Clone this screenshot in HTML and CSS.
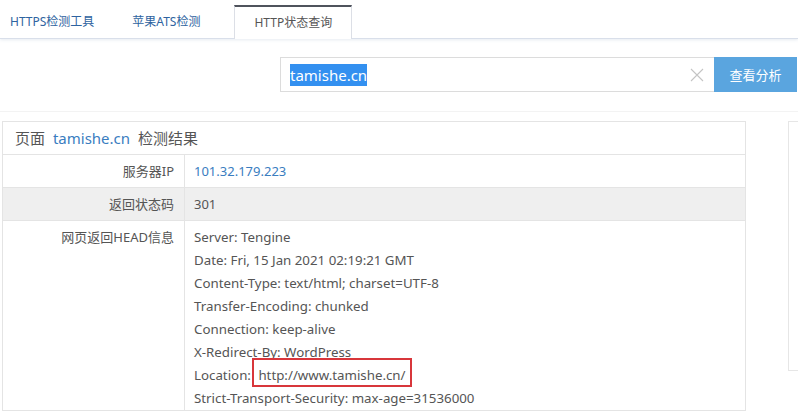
FILE: index.html
```html
<!DOCTYPE html>
<html lang="zh-CN">
<head>
<meta charset="utf-8">
<title>HTTP状态查询</title>
<link rel="stylesheet" href="styles.css">
</head>
<body>
<div class="tabs">
  <a class="tab tab-first">HTTPS检测工具</a>
  <a class="tab tab-second">苹果ATS检测</a>
  <a class="tab tab-active">HTTP状态查询</a>
</div>

<div class="search">
  <div class="search-box">
    <span class="search-text"><span class="selected">tamishe.cn</span></span>
    <svg class="clear" width="14" height="14" viewBox="0 0 14 14"><path d="M1 1L13 13M13 1L1 13" stroke="#c4c4c4" stroke-width="1.1" fill="none"/></svg>
  </div>
  <button class="search-btn">查看分析</button>
</div>

<div class="sep"></div>

<div class="main">
  <div class="panel">
    <div class="panel-head">页面 <span class="link">tamishe.cn</span> 检测结果</div>
    <div class="row">
      <div class="label">服务器IP</div>
      <div class="value link">101.32.179.223</div>
    </div>
    <div class="row row-gray">
      <div class="label">返回状态码</div>
      <div class="value">301</div>
    </div>
    <div class="row row-head">
      <div class="label">网页返回HEAD信息</div>
      <div class="value lines">
        <div>Server: Tengine</div>
        <div>Date: Fri, 15 Jan 2021 02:19:21 GMT</div>
        <div>Content-Type: text/html; charset=UTF-8</div>
        <div>Transfer-Encoding: chunked</div>
        <div>Connection: keep-alive</div>
        <div>X-Redirect-By: WordPress</div>
        <div>Location: <span class="mark">http://www.tamishe.cn/</span></div>
        <div>Strict-Transport-Security: max-age=31536000</div>
      </div>
    </div>
  </div>
  <div class="side"></div>
</div>
</body>
</html>
```

FILE: styles.css
```css
html, body {
  margin: 0;
  padding: 0;
  background: #ffffff;
  overflow: hidden;
}
body {
  width: 798px;
  height: 412px;
  font-family: "Noto Sans", "Noto Sans CJK SC", sans-serif;
  font-size: 13px;
  color: #555;
}

.tabs {
  height: 38px;
  display: flex;
  align-items: flex-end;
  padding-left: 10px;
  border-bottom: 1px solid #d9dfea;
  box-shadow: 0 1px 3px rgba(200, 210, 225, 0.45);
  position: relative;
  z-index: 1;
}
.tab {
  font-size: 12px;
  line-height: 33px;
  height: 33px;
  color: #2e63a0;
  white-space: nowrap;
}
.tab-first { margin-right: 38px; }
.tab-second { margin-right: 34px; }
.tab-active {
  color: #555;
  background: #fff;
  padding: 0 19px;
  height: 32px;
  line-height: 31px;
  border: 1px solid #dcdfe6;
  border-top: 2px solid #4f535c;
  border-bottom: none;
  margin-bottom: -1px;
}

.search {
  display: flex;
  margin-top: 18px;
  padding-left: 280px;
  height: 35px;
}
.search-box {
  width: 434px;
  height: 35px;
  box-sizing: border-box;
  border: 1px solid #dcdcdc;
  border-right: none;
  display: flex;
  align-items: center;
  padding-left: 9px;
  padding-right: 10px;
}
.search-text {
  flex: 1;
  font-size: 15px;
}
.selected {
  background: #3390f0;
  color: #fff;
  padding: 1px 0;
}
.clear { display: block; }
.search-btn {
  width: 83px;
  height: 35px;
  border: none;
  background: #5aa5df;
  color: #fff;
  font-family: "Noto Sans CJK SC", sans-serif;
  font-size: 13px;
  padding: 0;
}

.sep {
  margin-top: 19px;
  border-top: 1px solid #f3f3f3;
}

.main {
  display: flex;
  margin-top: 9px;
  padding-left: 2px;
}
.panel {
  flex: none;
  width: 744px;
  box-sizing: border-box;
  border: 1px solid #e4e4e4;
  border-bottom: none;
}
.panel-head {
  height: 32px;
  line-height: 32px;
  padding-left: 12px;
  font-size: 15px;
  border-bottom: 1px solid #e4e4e4;
  word-spacing: 4px;
}
.link { color: #3a7dbf; }
.row {
  display: grid;
  grid-template-columns: 182px 1fr;
  border-bottom: 1px solid #e4e4e4;
}
.row-gray { background: #efefef; }
.label {
  text-align: right;
  padding-right: 10px;
  line-height: 32px;
  border-right: 1px solid #e4e4e4;
}
.value {
  padding-left: 9px;
  line-height: 32px;
}
.row-head .label {
  line-height: 23px;
  padding-top: 5px;
}
.lines {
  font-size: 13.3px;
  line-height: 23px;
  padding-top: 5px;
}
.mark {
  position: relative;
  margin-left: 4px;
}
.mark::after {
  content: "";
  position: absolute;
  left: -6px;
  right: -6px;
  top: -8px;
  bottom: -3px;
  border: 2px solid #d8363b;
}
.side {
  flex: 1;
  margin-left: 42px;
  height: 248px;
  border: 1px solid #e6e6e6;
  border-right: none;
}
```
